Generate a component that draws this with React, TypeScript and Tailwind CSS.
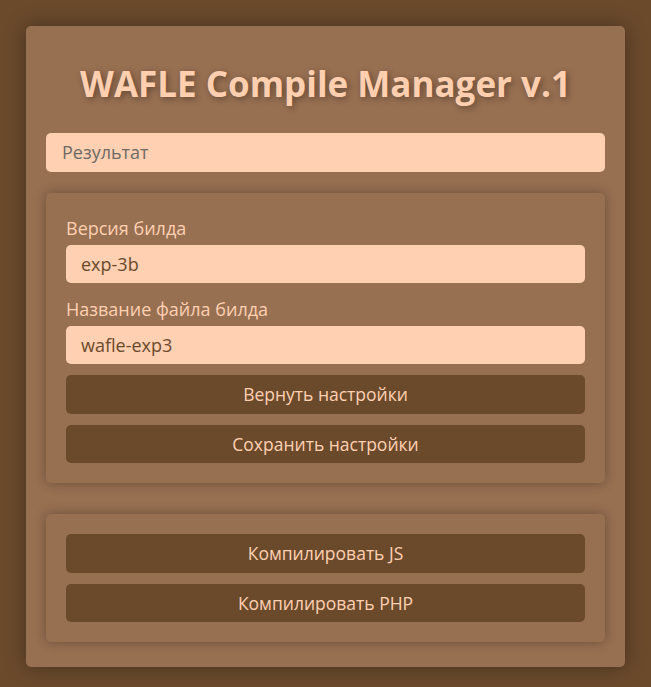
import React from "react";

const font = { fontFamily: '"Trebuchet MS", "Open Sans", "DejaVu Sans", sans-serif' };

export default function App() {
  return (
    <div className="min-h-[687px] w-full bg-[#6b4a2c] pt-[26px] pb-[20px]" style={font}>
      <div className="mx-auto w-[599px] rounded-[5px] bg-[#976f51] px-[20px] pt-[20px] pb-[25px] shadow-[0_0_20px_rgba(0,0,0,0.35)]">
        <div className="flex h-[72px] items-center justify-center pt-[4px] text-[35px] font-bold text-[#ffcfb0] [text-shadow:2px_2px_6px_rgba(0,0,0,0.35)]">
          WAFLE Compile Manager v.1
        </div>
        <div className="mt-[15px] flex h-[39px] items-center rounded-[5px] bg-[#ffd0b1] px-[16px] text-[18px] text-[#6e6a66]">
          Результат
        </div>
        <div className="mt-[21px] rounded-[5px] bg-[#976f51] px-[20px] pt-[20px] pb-[20px] shadow-[0_0_12px_rgba(0,0,0,0.3)]">
          <div className="mb-[3px] flex h-[29px] items-end text-[18px] text-[#ffd0b1]">Версия билда</div>
          <div className="mb-[11px] flex h-[38px] items-center rounded-[5px] bg-[#ffd0b1] px-[15px] text-[18px] text-[#6b4a2c]">exp-3b</div>
          <div className="mb-[3px] flex h-[29px] items-end text-[18px] text-[#ffd0b1]">Название файла билда</div>
          <div className="mb-[11px] flex h-[38px] items-center rounded-[5px] bg-[#ffd0b1] px-[15px] text-[18px] text-[#6b4a2c]">wafle-exp3</div>
          <div className="flex flex-col gap-[11px]">
            <div className="flex h-[39px] items-center justify-center rounded-[5px] bg-[#6b4a2c] text-[17.5px] text-[#ffd0b1]">Вернуть настройки</div>
            <div className="flex h-[38px] items-center justify-center rounded-[5px] bg-[#6b4a2c] text-[17.5px] text-[#ffd0b1]">Сохранить настройки</div>
          </div>
        </div>
        <div className="mt-[31px] flex flex-col gap-[11px] rounded-[5px] bg-[#976f51] p-[20px] shadow-[0_0_12px_rgba(0,0,0,0.3)]">
          <div className="flex h-[39px] items-center justify-center rounded-[5px] bg-[#6b4a2c] text-[17.5px] text-[#ffd0b1]">Компилировать JS</div>
          <div className="flex h-[38px] items-center justify-center rounded-[5px] bg-[#6b4a2c] text-[17.5px] text-[#ffd0b1]">Компилировать PHP</div>
        </div>
      </div>
    </div>
  );
}
